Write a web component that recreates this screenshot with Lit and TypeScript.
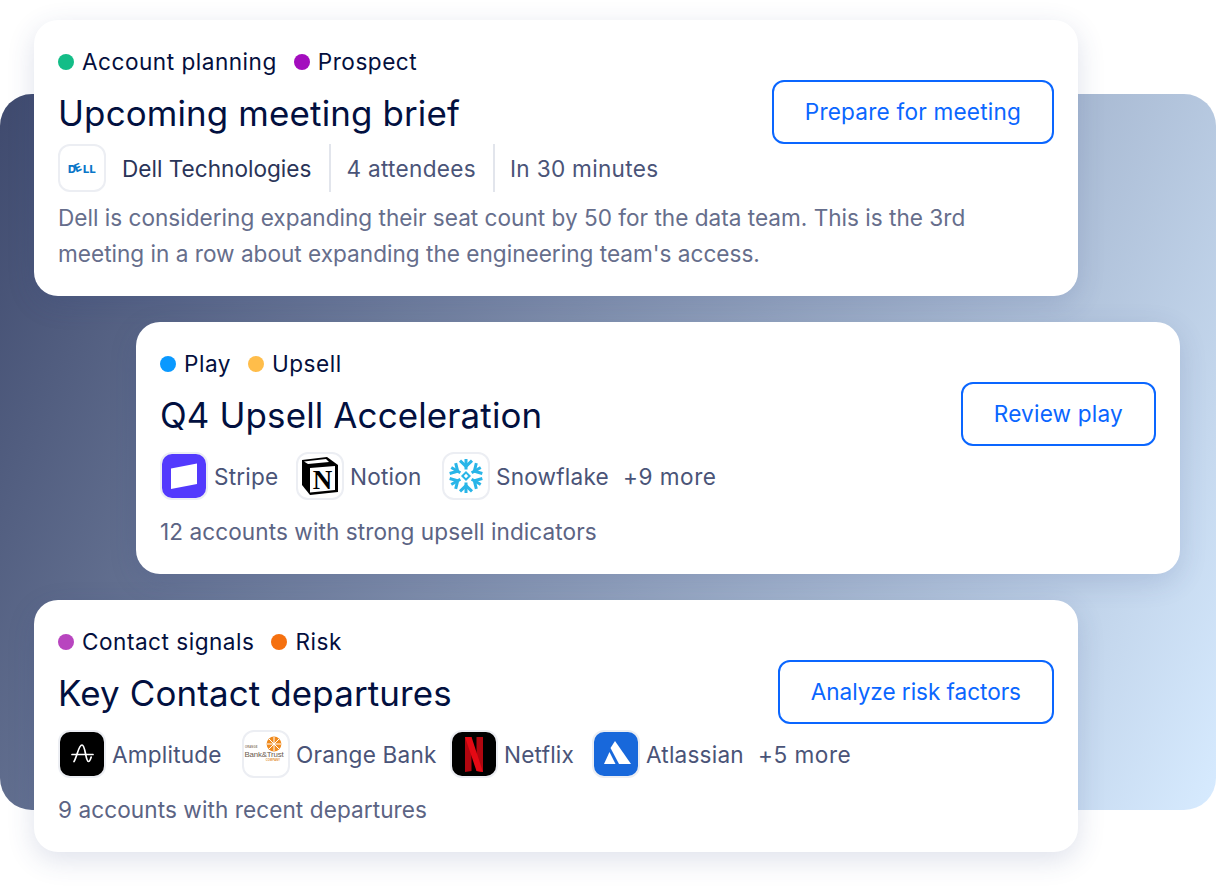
import { LitElement, html, css, svg } from "lit";
import { customElement } from "lit/decorators.js";

const icons: Record<string, unknown> = {
  dell: svg`<text class="t-dell" x="22" y="26.5" text-anchor="middle" rotate="0 -24 0 0">DELL</text>`,
  stripe: svg`<rect width="44" height="44" fill="#533afd"/><polygon points="9,14.5 35,9.5 35,30 9,35" fill="#fff"/>`,
  notion: svg`<polygon points="4,6 29,3 40,11 40,38 12,41 4,31" fill="#000"/><polygon points="6,7.5 28,5 31,8 10,10" fill="#fff"/><polygon points="12,14 37,12 37,36 12,38.5" fill="#fff"/><text class="t-notion" x="24.5" y="34.5" text-anchor="middle">N</text>`,
  snowflake: svg`<g stroke="#29b5e8" stroke-width="3" stroke-linejoin="miter" fill="none">
    ${[0, 60, 120, 180, 240, 300].map(
      (a) => svg`<g transform="rotate(${a} 22 22)"><path d="M22 15.5 V5"/><path d="M16 6.6 L22 12.4 L28 6.6"/></g>`
    )}
    </g><polygon points="22,18.4 25.6,22 22,25.6 18.4,22" fill="none" stroke="#29b5e8" stroke-width="2"/>`,
  amplitude: svg`<rect width="44" height="44" fill="#000"/><g fill="none" stroke="#fff" stroke-width="1.7" stroke-linecap="round"><path d="M12 22.5 H33"/><path d="M14 29.5 C17 25 18.5 13 22 13 C25.5 13 25.5 29.5 28.5 29.5 C29.8 29.5 30.6 27 31.2 25"/></g>`,
  orange: svg`<circle cx="30" cy="12" r="7.4" fill="#f08a1d"/><g stroke="#fff" stroke-width="1"><path d="M30 5 V19 M23 12 H37 M25 7 L35 17 M35 7 L25 17"/></g><text class="t-tiny" x="1" y="16">ORANGE</text><text class="t-bank" x="0.5" y="24.5">Bank&amp;Trust</text><text class="t-tiny o" x="29" y="28.8" text-anchor="middle">COMPANY</text>`,
  netflix: svg`<rect width="44" height="44" fill="#000"/><polygon points="13,5 19.5,5 19.5,39 13,40" fill="#b1060f"/><polygon points="24.5,5 31,5 31,40 24.5,39" fill="#b1060f"/><polygon points="13,5 19.5,5 31,40 24.5,39" fill="#e50914"/>`,
  atlassian: svg`<rect width="44" height="44" fill="#1868db"/><polygon points="21,9 37,32 25,32 16.5,16" fill="#fff"/><polygon points="15.5,20 21.5,32 10,32" fill="#fff"/>`,
};

interface Card {
  tags: [string, string][];
  title: string;
  action: string;
  note: string;
  logos?: [string, string, number][];
  more?: string;
  indent?: boolean;
  tight?: boolean;
}

const cards: Card[] = [
  {
    tags: [["Account planning", "#13bd87"], ["Prospect", "#a30dbe"]],
    title: "Upcoming meeting brief",
    action: "Prepare for meeting",
    note: "Dell is considering expanding their seat count by 50 for the data team. This is the 3rd meeting in a row about expanding the engineering team's access.",
  },
  {
    tags: [["Play", "#0a99ff"], ["Upsell", "#ffbd4a"]],
    title: "Q4 Upsell Acceleration",
    action: "Review play",
    note: "12 accounts with strong upsell indicators",
    logos: [["stripe", "Stripe", 65], ["notion", "Notion", 75], ["snowflake", "Snowflake", 112]],
    more: "+9 more",
    indent: true,
  },
  {
    tags: [["Contact signals", "#b845bf"], ["Risk", "#f5700f"]],
    title: "Key Contact departures",
    action: "Analyze risk factors",
    note: "9 accounts with recent departures",
    logos: [["amplitude", "Amplitude", 113], ["orange", "Orange Bank", 137], ["netflix", "Netflix", 71], ["atlassian", "Atlassian", 97]],
    more: "+5 more",
    tight: true,
  },
];

@customElement("app-root")
export class AppRoot extends LitElement {
  static styles = css`
    :host {
      display: block;
      position: relative;
      width: 1216px;
      height: 888px;
      overflow: hidden;
      background: #fff;
      font-family: Inter, "Noto Sans", sans-serif;
      font-size: 22.6px;
      line-height: 36px;
      color: #4a5478;
    }
    .panel {
      position: absolute;
      left: 0;
      top: 94px;
      width: 1216px;
      height: 716px;
      border-radius: 32px;
      background: linear-gradient(115.5deg, #3f4a6e 0%, #d7ebff 100%);
    }
    .stack {
      position: relative;
      display: flex;
      flex-direction: column;
      gap: 26px;
      padding: 20px 0 0 34px;
    }
    .card {
      box-sizing: border-box;
      width: 1044px;
      padding: 24px;
      display: flex;
      justify-content: space-between;
      align-items: flex-start;
      background: #fff;
      border-radius: 24px;
      box-shadow: 0 8px 28px rgba(50, 70, 130, 0.16);
    }
    .card.indent {
      margin-left: 102px;
    }
    .body {
      display: flex;
      flex-direction: column;
      gap: 8px;
      min-width: 0;
      white-space: nowrap;
    }
    .tags {
      display: flex;
      gap: 17px;
      color: #040f3d;
      letter-spacing: 0.5px;
    }
    .tag {
      display: flex;
      align-items: center;
      gap: 8px;
    }
    .dot {
      width: 16px;
      height: 16px;
      border-radius: 50%;
    }
    h2 {
      margin: 0;
      box-sizing: border-box;
      height: 48px;
      padding-top: 2px;
      font-size: 34.9px;
      line-height: 46px;
      font-weight: 420;
      letter-spacing: 0.15px;
      color: #02103f;
    }
    .btn {
      box-sizing: border-box;
      flex: none;
      margin-top: 36px;
      height: 64px;
      padding: 0 31px;
      display: flex;
      align-items: center;
      border: 2px solid #0a66ff;
      border-radius: 12px;
      background: #fff;
      color: #0a66ff;
      font: inherit;
      font-weight: 420;
      letter-spacing: 0.2px;
    }
    .btn.tight {
      letter-spacing: -0.05px;
    }
    .meta {
      display: flex;
      align-items: center;
      height: 48px;
      letter-spacing: 0.3px;
    }
    .company {
      box-sizing: border-box;
      height: 48px;
      display: flex;
      align-items: center;
      padding-top: 2px;
      margin-left: 16px;
      margin-right: 18px;
      color: #2a3458;
      font-weight: 400;
      letter-spacing: 0;
    }
    .fact {
      box-sizing: border-box;
      height: 48px;
      display: flex;
      align-items: center;
      padding: 2px 17px 0 15px;
      border-left: 2px solid #e2e5ec;
    }
    .logos {
      display: flex;
      align-items: center;
      gap: 17px;
      padding: 6px 0;
      letter-spacing: 0.2px;
    }
    .logo {
      display: flex;
      align-items: center;
      gap: 6px;
    }
    .lbl {
      padding-top: 2px;
    }
    .lbl.more {
      margin-left: -2px;
      letter-spacing: 0.5px;
    }
    .icon {
      box-sizing: border-box;
      flex: none;
      width: 48px;
      height: 48px;
      border: 2px solid #eceef3;
      border-radius: 12px;
      overflow: hidden;
      background: #fff;
    }
    .icon svg {
      display: block;
      width: 44px;
      height: 44px;
    }
    .note {
      margin: 0;
      width: 930px;
      color: #666e8c;
      white-space: normal;
    }
    .note.short {
      color: #5c6484;
      letter-spacing: 0.07px;
    }
    .t-dell {
      font: 800 11px Inter, sans-serif;
      fill: #0a76c8;
      letter-spacing: 0.2px;
    }
    .t-notion {
      font: 700 27px "Liberation Serif", serif;
      fill: #000;
    }
    .t-bank {
      font: 400 7.9px "Liberation Sans", sans-serif;
      fill: #6b5a4e;
      letter-spacing: -0.2px;
    }
    .t-tiny {
      font: 700 2.6px "Liberation Sans", sans-serif;
      fill: #8a7a6a;
    }
    .t-tiny.o {
      fill: #e08a2a;
    }
  `;

  private icon(name: string) {
    return html`<span class="icon"
      ><svg viewBox="0 0 44 44" xmlns="http://www.w3.org/2000/svg">${icons[name]}</svg></span
    >`;
  }

  render() {
    return html`
      <div class="panel"></div>
      <div class="stack">
        ${cards.map(
          (c) => html`
            <section class="card ${c.indent ? "indent" : ""}">
              <div class="body">
                <div class="tags">
                  ${c.tags.map(
                    ([t, col]) =>
                      html`<span class="tag"><span class="dot" style="background:${col}"></span>${t}</span>`
                  )}
                </div>
                <h2>${c.title}</h2>
                ${c.logos
                  ? html`<div class="logos">
                      ${c.logos.map(
                        ([i, n, w]) =>
                          html`<span class="logo">${this.icon(i)}<span class="lbl" style="width:${w}px">${n}</span></span>`
                      )}
                      <span class="lbl more">${c.more}</span>
                    </div>`
                  : html`<div class="meta">
                      ${this.icon("dell")}
                      <span class="company">Dell Technologies</span>
                      <span class="fact">4 attendees</span>
                      <span class="fact">In 30 minutes</span>
                    </div>`}
                <p class="note ${c.logos ? "short" : ""}">${c.note}</p>
              </div>
              <button class="btn ${c.tight ? "tight" : ""}">${c.action}</button>
            </section>
          `
        )}
      </div>
    `;
  }
}
